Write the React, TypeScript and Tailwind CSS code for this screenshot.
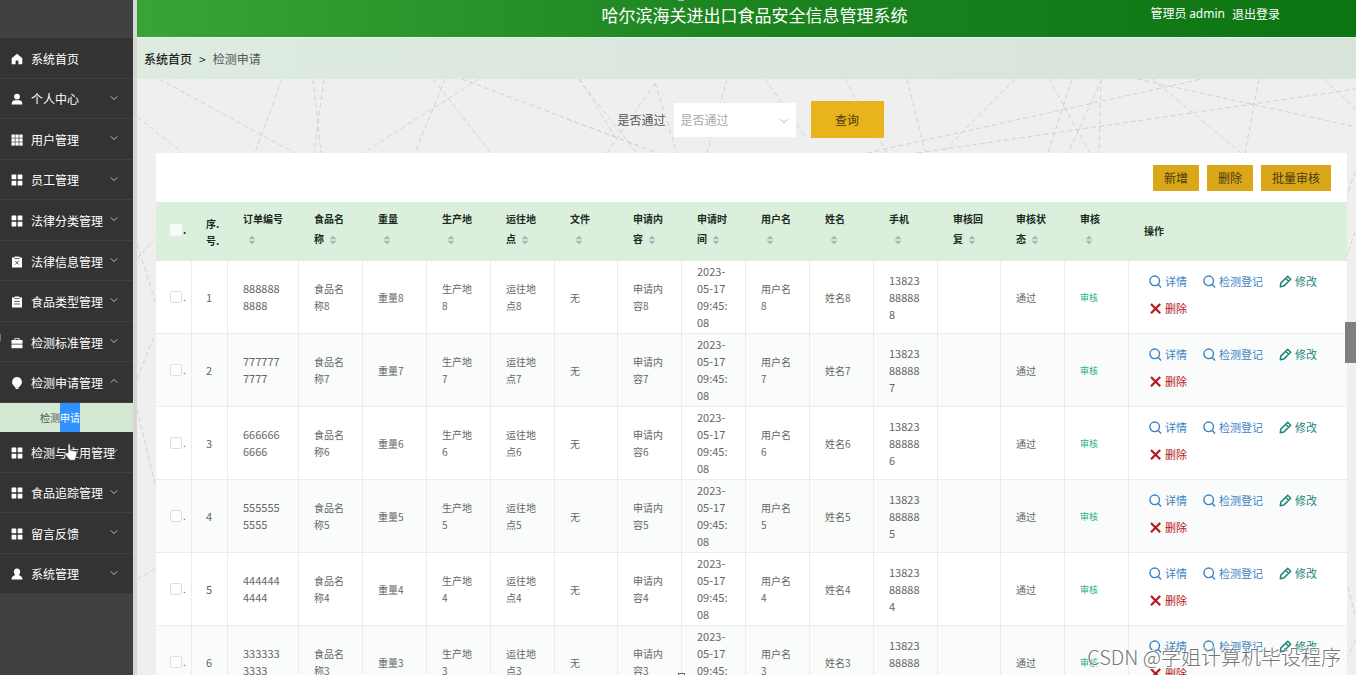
import React, { useState } from 'react';

type IconName = 'home' | 'user' | 'grid' | 'menu' | 'clipX' | 'clip' | 'case' | 'bulb' | 'person';

interface MenuEntry {
  label: string;
  icon: IconName;
  open?: boolean;
  leaf?: boolean;
}

const topMenu: MenuEntry[] = [
  { label: '系统首页', icon: 'home', leaf: true },
  { label: '个人中心', icon: 'user' },
  { label: '用户管理', icon: 'grid' },
  { label: '员工管理', icon: 'menu' },
  { label: '法律分类管理', icon: 'menu' },
  { label: '法律信息管理', icon: 'clipX' },
  { label: '食品类型管理', icon: 'clip' },
  { label: '检测标准管理', icon: 'case' },
  { label: '检测申请管理', icon: 'bulb', open: true },
];

const bottomMenu: MenuEntry[] = [
  { label: '检测与应用管理', icon: 'menu' },
  { label: '食品追踪管理', icon: 'menu' },
  { label: '留言反馈', icon: 'menu' },
  { label: '系统管理', icon: 'person' },
];

const columns = [
  { label: '订单编号', width: 'w-[71px]' },
  { label: '食品名称', width: 'w-[64px]' },
  { label: '重量', width: 'w-[64px]' },
  { label: '生产地', width: 'w-[64px]' },
  { label: '运往地点', width: 'w-[64px]' },
  { label: '文件', width: 'w-[63px]' },
  { label: '申请内容', width: 'w-[64px]' },
  { label: '申请时间', width: 'w-[64px]' },
  { label: '用户名', width: 'w-[64px]' },
  { label: '姓名', width: 'w-[64px]' },
  { label: '手机', width: 'w-[64px]' },
  { label: '审核回复', width: 'w-[63px]' },
  { label: '审核状态', width: 'w-[64px]' },
  { label: '审核', width: 'w-[64px]' },
];

const rows = [8, 7, 6, 5, 4, 3].map((n, i) => ({
  index: i + 1,
  order: String(n).repeat(10),
  food: `食品名称${n}`,
  weight: `重量${n}`,
  origin: `生产地${n}`,
  dest: `运往地点${n}`,
  file: '无',
  content: `申请内容${n}`,
  time: '2023-05-17 09:45:08',
  account: `用户名${n}`,
  name: `姓名${n}`,
  phone: `1382388888${n}`,
  reply: '',
  status: '通过',
}));

const MenuIcon = ({ name }: { name: IconName }) => (
  <svg viewBox="0 0 12 12" className="w-[12px] h-[12px] shrink-0" fill="currentColor" aria-hidden="true">
    {name === 'home' && <path d="M6 .8 11.3 5.2V11.3H7.4V7.6H4.6v3.7H.7V5.2z" />}
    {name === 'user' && (
      <>
        <circle cx="6" cy="3.6" r="2.9" />
        <path d="M.6 11.4C.6 8.4 2 7.3 4 7.3h4c2 0 3.4 1.1 3.4 4.1z" />
      </>
    )}
    {name === 'grid' && [0.5, 4.4, 8.3].map(y => [0.5, 4.4, 8.3].map(x => (
      <rect key={`${x}-${y}`} x={x} y={y} width="3.3" height="3.3" />
    )))}
    {name === 'menu' && [0.6, 6.7].map(y => [0.6, 6.7].map(x => (
      <rect key={`${x}-${y}`} x={x} y={y} width="4.7" height="4.7" rx=".4" />
    )))}
    {name === 'clipX' && (
      <>
        <path d="M1 1.6h2.6V.5h4.8v1.1H11v10H1z" />
        <path d="M4.2 4.8 7.8 8.6M7.8 4.8 4.2 8.6M3.6 2.6h4.8" stroke="#333" strokeWidth=".8" />
      </>
    )}
    {name === 'clip' && (
      <>
        <path d="M1 1.6h2.6V.5h4.8v1.1H11v10H1z" />
        <path d="M3.2 5.4h5.6M3.2 8h5.6M3.6 2.6h4.8" stroke="#333" strokeWidth=".8" />
      </>
    )}
    {name === 'case' && (
      <>
        <path d="M3.4 3V1.2h5.2V3h2.9v3.7H.5V3zM4.3 3h3.4v-.9H4.3z" fillRule="evenodd" />
        <path d="M.5 7.5h11v3.7H.5z" />
      </>
    )}
    {name === 'bulb' && <path d="M6 .1a4.900 4.900 0 0 1 3.300 8.500L8.300 10H3.700L2.700 8.600A4.900 4.900 0 0 1 6 .1zM4 10.300h4L7.200 12H4.800z" />}
    {name === 'person' && (
      <>
        <path d="M6 .6c2 0 3.2 1.3 3.2 3.1S8 7.5 6 7.5 2.800 5.500 2.800 3.700 4 .6 6 .6z" />
        <path d="M.5 11.400C.6 9 2 8 4.400 6.800h3.200C10 8 11.400 9 11.500 11.400z" />
      </>
    )}
  </svg>
);

const Chevron = ({ up = false, className = '' }: { up?: boolean; className?: string }) => (
  <svg viewBox="0 0 8 8" className={`w-[8px] h-[8px] ${className}`} fill="none" stroke="currentColor" strokeWidth="1" aria-hidden="true">
    <path d={up ? 'M.8 5.6 4 2.4l3.2 3.2' : 'M.8 2.4 4 5.6l3.2-3.2'} />
  </svg>
);

const SortCaret = () => (
  <span className="inline-flex w-[18px] justify-center align-middle">
    <svg viewBox="0 0 8 10" className="w-[8px] h-[10px]" fill="#a9b8b0" aria-hidden="true">
      <path d="M4 .5 7.4 4.3H.6zM4 9.5.6 5.7h6.800z" />
    </svg>
  </span>
);

const SearchIcon = () => (
  <svg viewBox="0 0 13 13" className="w-[13px] h-[13px]" fill="none" stroke="currentColor" strokeWidth="1.4" aria-hidden="true">
    <circle cx="5.7" cy="5.8" r="4.8" />
    <path d="m9.2 9.4 2.9 3" />
  </svg>
);

const EditIcon = () => (
  <svg viewBox="0 0 13 13" className="w-[13px] h-[13px]" fill="none" stroke="currentColor" strokeWidth="1.500" strokeLinejoin="round" aria-hidden="true">
    <path d="M8.700 1.300 11.700 4.200 4.700 11.100 1.300 11.800 1.800 8.100zM6.700 3.300 9.600 6.200" />
  </svg>
);

const CloseIcon = () => (
  <svg viewBox="0 0 13 13" className="w-[13px] h-[13px]" fill="none" stroke="currentColor" strokeWidth="2.2" aria-hidden="true">
    <path d="m2 2 9.2 9.2M11.2 2 2 11.2" />
  </svg>
);

const MenuRow = ({ entry }: { entry: MenuEntry }) => (
  <li className="border-b border-[#404040]">
    <button className="relative flex h-full w-full items-center pl-[11px] pt-[2px] text-left text-[12px] text-white whitespace-nowrap" aria-expanded={entry.leaf ? undefined : !!entry.open}>
      <MenuIcon name={entry.icon} />
      <span className="ml-2">{entry.label}</span>
      {!entry.leaf && <Chevron up={entry.open} className="absolute right-[15px] top-[15px] text-[#c4c4c4]" />}
    </button>
  </li>
);

const Sidebar = () => (
  <aside className="relative w-[133px] shrink-0 bg-[#414141] pt-[38px]">
    <ul className="grid h-[365px] auto-rows-fr bg-[#333]">
      {topMenu.map(entry => <MenuRow key={entry.label} entry={entry} />)}
    </ul>
    <a href="#apply" className="flex h-[29px] items-center bg-[#d4e9d3] pl-[40px] text-[10px] text-[#555]">
      检测<span className="bg-[#3390ff] text-white leading-[29px]">申请</span>
    </a>
    <ul className="grid h-[162px] auto-rows-fr bg-[#333]">
      {bottomMenu.map(entry => <MenuRow key={entry.label} entry={entry} />)}
    </ul>
    {/* Hand pointer resting on the menu */}
    <svg viewBox="0 0 14 18" className="absolute left-[64px] top-[443px] w-[14px] h-[18px]" fill="#fff" stroke="#333" strokeWidth=".8" aria-hidden="true">
      <path d="M4 10V2c0-1.800 2.200-1.800 2.200 0v5l5.300 1.100c1.100.300 1.700 1 1.500 2.200l-.9 4.200-1.200 2.800H5.800L1 11.200c-.6-1.200.9-2.200 2-1.200z" />
    </svg>
    <span className="absolute left-0 top-[334px] h-[7px] w-px bg-[#3f7fc0]" />
  </aside>
);

// Thin dashed web behind the content area
const webLines = [
  [22, 0, 158, 74], [0, 38, 46, 74], [145, 0, 118, 74], [176, 0, 184, 74], [187, 0, 177, 74],
  [296, 0, 354, 74], [308, 0, 278, 74], [342, 0, 226, 74], [325, 0, 500, 66], [441, 0, 500, 74],
  [518, 4, 470, 74], [518, 4, 540, 74], [430, 40, 520, 74], [443, 0, 478, 58], [590, 0, 570, 74],
  [708, 0, 750, 74], [770, 0, 788, 72], [878, 0, 805, 74], [730, 74, 1065, 0], [780, 74, 1219, 10],
  [912, 0, 953, 74], [965, 0, 931, 74], [935, 0, 911, 74], [964, 0, 962, 74], [1000, 0, 1219, 48],
  [1015, 0, 1104, 74], [1122, 0, 1108, 74], [1186, 0, 1219, 30], [628, 0, 670, 60],
  [0, 165, 18, 222], [0, 180, 18, 160], [0, 300, 18, 255], [0, 330, 18, 405], [0, 500, 18, 490],
  [1209, 120, 1219, 90], [1209, 180, 1219, 150], [1209, 500, 1219, 540], [1209, 580, 1219, 560],
];

const Web = () => (
  <svg className="absolute inset-0 h-full w-full" aria-hidden="true">
    {webLines.map(([x1, y1, x2, y2], i) => (
      <line key={i} x1={x1} y1={y1} x2={x2} y2={y2} stroke="#d3d3d3" strokeWidth="1" strokeDasharray="5 3" />
    ))}
  </svg>
);

const td = 'border-r border-b border-[#ebedeb] pl-[15px] pr-[15px] break-all';

const App: React.FC = () => {
  const [passed, setPassed] = useState('');

  return (
    <div className="relative flex h-screen overflow-hidden bg-[#efefef] font-['Noto_Sans_CJK_SC','Noto_Sans',sans-serif] text-[#333]">
      <Sidebar />

      <div className="flex min-w-0 flex-1 flex-col border-l-4 border-[#d6d6d6]">
        <header className="grid h-[37px] shrink-0 grid-cols-[1fr_auto_1fr] bg-linear-to-r from-[#38a438] via-[#1c841f] to-[#0b7512] text-white">
          <h1 className="col-start-2 mt-[3px] text-[17px] leading-[24px] pl-[16px]">哈尔滨海关进出口食品安全信息管理系统</h1>
          <div className="flex h-[27px] items-center justify-end gap-[7px] pr-[76px] text-[12px]">
            <span>管理员 <span className="font-['Noto_Sans']">admin</span></span>
            <button>退出登录</button>
          </div>
        </header>

        <nav className="mt-px flex h-[41px] shrink-0 items-center gap-[7px] bg-linear-to-r from-[#deebe1] to-[#d8e3d9] pl-[7px] text-[12px]" aria-label="Breadcrumb">
          <a href="#home" className="font-medium text-[#222]">系统首页</a>
          <span>&gt;</span>
          <span className="text-[#555]">检测申请</span>
        </nav>

        <main className="relative flex-1 overflow-hidden pl-[19px] pr-[9px]">
          <Web />
          <form className="relative flex h-[74px] items-center justify-center pr-[2px] pt-[7px] text-[12px]" onSubmit={e => e.preventDefault()}>
            <label htmlFor="passed" className="mr-[8px] text-[#555]">是否通过</label>
            <div className="relative">
              <select
                id="passed"
                value={passed}
                onChange={e => setPassed(e.target.value)}
                className="h-[34px] w-[122px] appearance-none bg-white pl-[7px] text-[12px] text-[#aaa] outline-none"
              >
                <option value="">是否通过</option>
                <option value="yes">是</option>
                <option value="no">否</option>
              </select>
              <Chevron className="pointer-events-none absolute right-[8px] top-[14px] text-[#aaa]" />
            </div>
            <button className="ml-[15px] h-[37px] w-[73px] bg-[#e8b31b] text-[#4a3a10]">查询</button>
          </form>

          <section className="relative bg-white">
            <div className="flex h-[49px] items-center justify-end gap-2 pr-[16px] text-[12px] text-[#4a3a10]">
              <button className="h-[26px] bg-[#dba71a] px-[11px]">新增</button>
              <button className="h-[26px] bg-[#dba71a] px-[11px]">删除</button>
              <button className="h-[26px] bg-[#dba71a] px-[11px]">批量审核</button>
            </div>

            <table className="w-full table-fixed border-separate border-spacing-0 text-[10px] leading-[17px] text-[#666]">
              <thead>
                <tr className="h-[59px] bg-[#daf0dc] text-left text-[#1d2a1f]">
                  <th className="w-[36px] pb-[4px] pl-[14px]">
                    <span className="flex items-end gap-px">
                      <input type="checkbox" aria-label="全选" className="h-[12px] w-[12px] appearance-none rounded-xs bg-[#f6faff]" />
                      <span className="leading-[12px]">.</span>
                    </span>
                  </th>
                  <th className="w-[36px] pl-[14px] text-left">序.<br />号.</th>
                  {columns.map(col => (
                    <th key={col.label} className={`${col.width} break-all pb-[5px] pl-[15px] pr-[14px] leading-[20px]`}>
                      {col.label}<SortCaret />
                    </th>
                  ))}
                  <th className="pb-[2px] pl-[15px]">操作</th>
                </tr>
              </thead>
              <tbody>
                {rows.map(row => (
                  <tr key={row.index} className="h-[73px] bg-white even:bg-[#f9fcfa]">
                    <td className="border-r border-b border-[#ebedeb] pl-[14px]">
                      <span className="flex items-end gap-px">
                        <input type="checkbox" aria-label={`选择 ${row.index}`} className="h-[12px] w-[12px] appearance-none rounded-xs border border-[#dfdfdf] bg-white" />
                        <span className="leading-[12px]">.</span>
                      </span>
                    </td>
                    <td className="border-r border-b border-[#ebedeb] pl-[14px] text-[11px]">{row.index}</td>
                    <td className={`${td} text-[11px]`}>{row.order}</td>
                    <td className={td}>{row.food}</td>
                    <td className={td}>{row.weight}</td>
                    <td className={td}>{row.origin}</td>
                    <td className={td}>{row.dest}</td>
                    <td className={td}>{row.file}</td>
                    <td className={td}>{row.content}</td>
                    <td className={`${td} text-[11px]`}>{row.time}</td>
                    <td className={td}>{row.account}</td>
                    <td className={td}>{row.name}</td>
                    <td className={`${td} text-[11px]`}>{row.phone}</td>
                    <td className={td}>{row.reply}</td>
                    <td className={td}>{row.status}</td>
                    <td className={td}><button className="text-[9px] text-[#1fae83]">审核</button></td>
                    <td className="border-b border-[#ebedeb] pb-[5px] pl-[20px]">
                      <div className="flex flex-wrap gap-x-4 gap-y-[10px] text-[11px] whitespace-nowrap">
                        <button className="flex items-center gap-[3px] text-[#3b82c4]"><SearchIcon />详情</button>
                        <button className="flex items-center gap-[3px] text-[#3b82c4]"><SearchIcon />检测登记</button>
                        <button className="flex items-center gap-[3px] text-[#1d8577]"><EditIcon />修改</button>
                        <button className="flex items-center gap-[3px] text-[#b51a1a]"><CloseIcon />删除</button>
                      </div>
                    </td>
                  </tr>
                ))}
              </tbody>
            </table>
          </section>
        </main>
      </div>

      <span className="absolute right-0 top-[322px] h-[41px] w-[11px] bg-[#808080]" />
      <span className="absolute left-1/2 top-0 h-px w-[6px] bg-[#a9b5e8]" />
      <span className="absolute left-1/2 bottom-0 h-[2px] w-[7px] border border-b-0 border-[#4d6f7c] bg-white" />
      <p className="absolute bottom-[4px] right-[15px] text-[20px] leading-[28px] font-light text-[#777] [text-shadow:1px_1px_0_#fff,-1px_-1px_0_#fff]">
        CSDN @学姐计算机毕设程序
      </p>
    </div>
  );
};

export default App;
